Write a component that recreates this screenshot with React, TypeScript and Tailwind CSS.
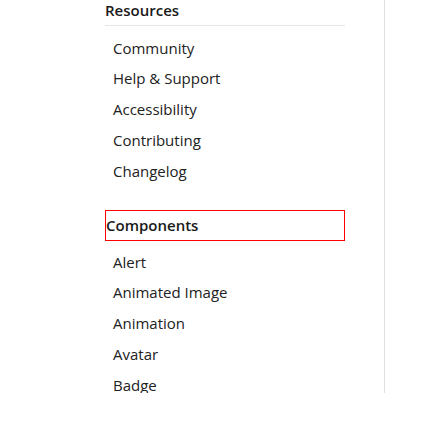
import React from "react";

const resources = ["Community", "Help & Support", "Accessibility", "Contributing", "Changelog"];
const components = ["Alert", "Animated Image", "Animation", "Avatar", "Badge"];

export default function App() {
  return (
    <div className="w-[448px] h-[448px] bg-white" style={{ fontFamily: '"Open Sans", "Noto Sans", sans-serif' }}>
      <div className="w-[385px] h-[393px] overflow-hidden border-r border-[#e0e0e0] pl-[105px]">
        <div className="w-[240px]">
          <div className="h-[26px] border-b border-[#e5e5e5] text-[15px] font-semibold leading-[20px] text-[#1a1a1a]">
            Resources
          </div>
          <ul className="pt-[6.6px]">
            {resources.map((r) => (
              <li key={r} className="h-[30.75px] flex items-center pl-[8px] text-[15px] text-[#222]">
                {r}
              </li>
            ))}
          </ul>
          <div className="mt-[23.6px] h-[31px] border border-[#ff0000] flex items-center text-[15px] font-semibold text-[#1a1a1a]">
            Components
          </div>
          <ul className="pt-[5.6px]">
            {components.map((r) => (
              <li key={r} className="h-[30.75px] flex items-center pl-[8px] text-[15px] text-[#222]">
                {r}
              </li>
            ))}
          </ul>
        </div>
      </div>
    </div>
  );
}
